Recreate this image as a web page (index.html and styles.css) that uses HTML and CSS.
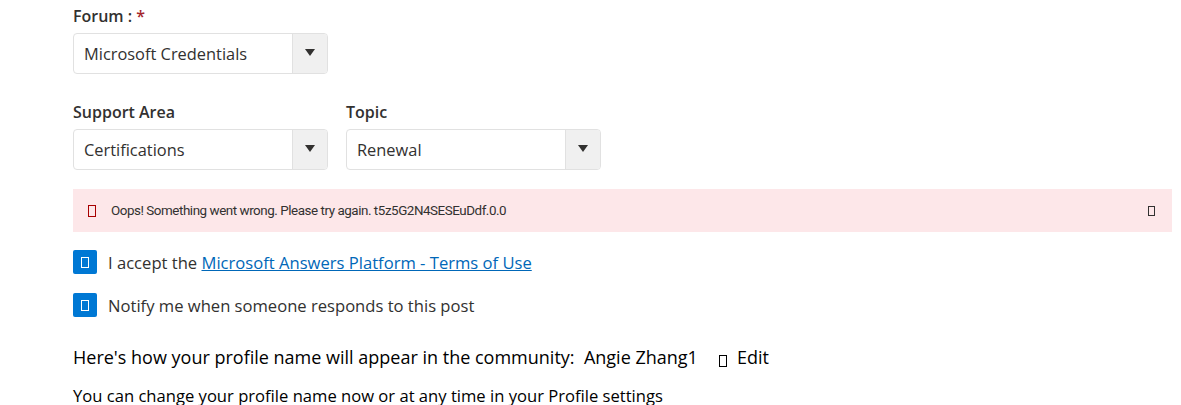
FILE: index.html
```html
<!DOCTYPE html>
<html lang="en">
<head>
  <meta charset="UTF-8" />
  <title>Ask a question</title>
  <link rel="stylesheet" href="styles.css">
</head>
<body>

<div class="form">

  <!-- FORUM -->
  <div class="field">
    <label class="label">Forum : <span class="req">*</span></label>
    <div class="select">
      <span class="value">Microsoft Credentials</span>
      <span class="arrow"></span>
    </div>
  </div>

  <!-- SUPPORT AREA + TOPIC -->
  <div class="row">
    <div class="field">
      <label class="label">Support Area</label>
      <div class="select">
        <span class="value">Certifications</span>
        <span class="arrow"></span>
      </div>
    </div>
    <div class="field">
      <label class="label">Topic</label>
      <div class="select">
        <span class="value">Renewal</span>
        <span class="arrow"></span>
      </div>
    </div>
  </div>

  <!-- ERROR -->
  <div class="error">
    <span class="tofu red"></span>
    <span class="error-text">Oops! Something went wrong. Please try again. t5z5G2N4SESEuDdf.0.0</span>
    <span class="tofu close"></span>
  </div>

  <!-- CHECKBOXES -->
  <div class="check">
    <span class="box"><span class="tofu white"></span></span>
    <span>I accept the <a href="#">Microsoft Answers Platform - Terms of Use</a></span>
  </div>
  <div class="check">
    <span class="box"><span class="tofu white"></span></span>
    <span>Notify me when someone responds to this post</span>
  </div>

  <!-- PROFILE -->
  <p class="profile">Here's how your profile name will appear in the community:&nbsp; Angie Zhang1<span class="edit"><span class="tofu dark"></span>Edit</span></p>
  <p class="note">You can change your profile name now or at any time in your Profile settings</p>

</div>

</body>
</html>
```

FILE: styles.css
```css
* { box-sizing: border-box; }
body, html {
  margin: 0; padding: 0;
  font-family: 'Open Sans', sans-serif;
  background: #fff;
  color: #323130;
  overflow: hidden;
}
.form { padding: 5px 0 0 73px; }
.field { display: flex; flex-direction: column; }
.label { font-size: 16px; font-weight: 600; color: #323130; line-height: 22px; margin-bottom: 6px; }
.req { color: #a4262c; }
.select {
  width: 255px; height: 41px;
  display: flex; align-items: stretch;
  border: 1px solid #e1e1e1; border-radius: 4px;
  overflow: hidden;
}
.value { flex: 1; padding: 0 10px; font-size: 16.4px; line-height: 39px; color: #323130; }
.arrow {
  width: 35px; background: #f0f0f0; border-left: 1px solid #e1e1e1;
  position: relative;
}
.arrow::after {
  content: ""; position: absolute; left: 12px; top: 15px;
  border-left: 5px solid transparent; border-right: 5px solid transparent;
  border-top: 7px solid #323130;
}
.row { display: flex; gap: 18px; margin-top: 27px; }
.error {
  display: flex; align-items: center;
  margin: 19px 9px 0 0; height: 43px;
  background: #fde7e9; padding: 0 17px 0 15px;
  font-family: Roboto, sans-serif;
  font-size: 13.4px; letter-spacing: -0.45px; color: #323130;
}
.error-text { flex: 1; margin-left: 15px; }
.tofu { display: inline-block; width: 8px; height: 12px; border: 1px solid #323130; }
.tofu.red { border-color: #a80000; }
.tofu.close { width: 7px; height: 10px; }
.check { display: flex; align-items: center; gap: 11px; font-size: 16.6px; margin-top: 18px; color: #323130; }
.check + .check { margin-top: 19px; }
.box {
  width: 24px; height: 24px; background: #0078d4; border-radius: 2px;
  display: flex; align-items: center; justify-content: center;
}
.tofu.white { border-color: #fff; width: 8px; height: 11px; }
a { color: #0067b8; }
.profile { font-size: 18px; margin: 28px 0 0; color: #000; }
.edit { margin-left: 21px; }
.tofu.dark { border-color: #000; width: 8px; height: 12px; margin-right: 10px; vertical-align: -3px; }
.note { font-size: 16.6px; margin: 15px 0 0; color: #000; }
```
